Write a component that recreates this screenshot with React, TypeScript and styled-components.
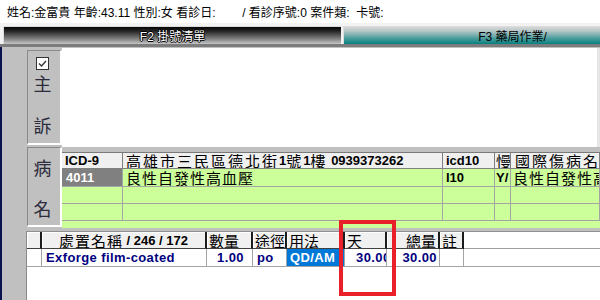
import React from "react";
import styled, { createGlobalStyle } from "styled-components";

const GlobalStyle = createGlobalStyle`
  * { box-sizing: border-box; }
  html, body { margin: 0; padding: 0; background: #fff; }
  body { font-family: "Liberation Sans", "Noto Sans CJK TC", sans-serif; }
`;

const DX_COLS = "61px 320px 52px 16px minmax(0, 1fr)";
const RX_COLS = "15px 165px 46px 34px 58px 42px 53px 24px minmax(0, 1fr)";

const Screen = styled.div`
  position: relative;
  width: 600px;
  height: 300px;
  overflow: hidden;
  display: flex;
  flex-direction: column;
  background: #fff;
`;

const InfoBar = styled.div`
  flex: none;
  height: 23px;
  padding-left: 7px;
  display: flex;
  align-items: center;
  font-size: 12px;
  color: #000;
  white-space: pre;
`;

const TabStrip = styled.div`
  flex: none;
  height: 24px;
  display: flex;
  gap: 2px;
  padding: 3px 0 0 3px;
  background: #f2f2f2;
  border-bottom: 3px solid #7c7c7c;
  overflow: hidden;
`;

const Tab = styled.div<{ $active?: boolean }>`
  flex: none;
  width: 338px;
  display: flex;
  align-items: center;
  justify-content: center;
  font-size: 12px;
  border-top: 1px solid #dcdcdc;
  border-left: 1px solid #dcdcdc;
  background: ${(p) =>
    p.$active
      ? "linear-gradient(to bottom, #d6d6d6 0%, #b2c6c6 25%, #4f9e9e 65%, #058080 100%)"
      : "linear-gradient(to bottom, #050505 0%, #262626 25%, #8c8c8c 75%, #c6c6c6 100%)"};
  color: ${(p) => (p.$active ? "#000" : "#fff")};
  text-shadow: ${(p) =>
    p.$active
      ? "none"
      : "1px 0 0 #000, -1px 0 0 #000, 0 1px 0 #000, 0 -1px 0 #000"};
`;

const Body = styled.div`
  flex: 1;
  display: flex;
  flex-direction: column;
  background: #c0c0c0;
  border-left: 2px solid #0b1250;
  padding-left: 24px;
`;

const Upper = styled.div`
  flex: none;
  height: 184px;
  display: flex;
`;

const SideColumn = styled.div`
  flex: none;
  width: 36px;
  display: flex;
  flex-direction: column;
  gap: 2px;
  padding: 3px 0 0 1px;
`;

const SidePanel = styled.div<{ $h: number; $pad: number }>`
  height: ${(p) => p.$h}px;
  display: flex;
  flex-direction: column;
  align-items: center;
  padding: ${(p) => p.$pad}px 3px 0 0;
  border-top: 1px solid #8a8a8a;
  border-left: 1px solid #8a8a8a;
  border-right: 2px solid #fff;
  border-bottom: 2px solid #fff;
`;

const SideChar = styled.div<{ $mt: number }>`
  margin-top: ${(p) => p.$mt}px;
  height: 20px;
  line-height: 20px;
  font-size: 18px;
  font-family: "Noto Sans CJK TC", sans-serif;
  color: #2c2c3c;
`;

const CheckBox = styled.div`
  width: 13px;
  height: 13px;
  background: #fff;
  border: 1px solid #333;
  display: flex;
  align-items: center;
  justify-content: center;
`;

const RightPane = styled.div`
  flex: 1;
  min-width: 0;
  display: flex;
  flex-direction: column;
  padding-top: 1px;
`;

const Complaint = styled.div`
  height: 99px;
  margin-bottom: 5px;
  background: #fff;
  border-right: 3px solid #e6e6e6;
`;

const DxTable = styled.div`
  height: 76px;
  background: #ccff99;
  border-top: 1px solid #7a7a7a;
  overflow: hidden;
`;

const GridRow = styled.div<{ $cols: string; $h: number }>`
  display: grid;
  grid-template-columns: ${(p) => p.$cols};
  height: ${(p) => p.$h}px;
`;

const DxHead = styled.div<{ $pad?: number }>`
  display: flex;
  align-items: center;
  background: #f0f0f0;
  border-right: 1px solid #808080;
  border-bottom: 1px solid #808080;
  padding-left: ${(p) => p.$pad ?? 3}px;
  font-size: 13px;
  font-weight: bold;
  line-height: 14px;
  white-space: pre;
  overflow: hidden;
`;

const DxCell = styled.div<{ $sel?: boolean; $pad?: number }>`
  display: flex;
  align-items: center;
  background: ${(p) => (p.$sel ? "#808080" : "transparent")};
  color: ${(p) => (p.$sel ? "#fff" : "#000")};
  border-right: 1px solid #a4a4a4;
  border-bottom: 1px solid #a4a4a4;
  padding-left: ${(p) => p.$pad ?? 3}px;
  font-size: 13px;
  font-weight: bold;
  line-height: 15px;
  white-space: nowrap;
  overflow: hidden;
`;

const Han = styled.span<{ $sp?: number }>`
  font-family: "Noto Sans CJK TC", sans-serif;
  font-weight: 400;
  font-size: 15px;
  line-height: 15px;
  letter-spacing: ${(p) => p.$sp ?? 1}px;
`;

const Lower = styled.div`
  flex: 1;
  background: #fff;
  border-left: 1px solid #8a8a8a;
  border-top: 1px solid #909090;
`;

const RxHead = styled.div<{ $align?: string }>`
  display: flex;
  align-items: center;
  justify-content: ${(p) =>
    p.$align === "center" ? "center" : p.$align === "right" ? "flex-end" : "flex-start"};
  background: #f0f0f0;
  border-right: 2px solid #1c1c1c;
  border-bottom: 1px solid #404040;
  box-shadow: inset 1px 1px 0 #fff;
  padding: 0 2px;
  font-size: 13px;
  font-weight: bold;
  line-height: 15px;
  white-space: pre;
  overflow: hidden;
`;

const RxHeadFill = styled.div`
  border-bottom: 1px solid #a0a0a0;
`;

const RxCell = styled.div<{ $align?: string; $sel?: boolean; $padL?: number; $padR?: number }>`
  background: ${(p) => (p.$sel ? "#0078d7" : "#fff")};
  color: ${(p) => (p.$sel ? "#fff" : "#000080")};
  border-right: 1px solid #a4a4a4;
  border-bottom: 1px solid #a4a4a4;
  padding: 0 ${(p) => p.$padR ?? 0}px 0 ${(p) => p.$padL ?? 0}px;
  text-align: ${(p) => p.$align ?? "left"};
  font-size: 13px;
  font-weight: bold;
  line-height: 17px;
  letter-spacing: 0.4px;
  white-space: nowrap;
  overflow: hidden;
`;

const RxFill = styled.div`
  border-bottom: 1px solid #a4a4a4;
`;

const Highlight = styled.div`
  position: absolute;
  left: 339px;
  top: 220px;
  width: 57px;
  height: 76px;
  border: 4px solid #e8202a;
  pointer-events: none;
`;

export default function App() {
  return (
    <>
      <GlobalStyle />
      <Screen>
        <InfoBar>
          {"姓名:金富貴 年齡:43.11 性別:女 看診日:        / 看診序號:0 案件類:  卡號:"}
        </InfoBar>
        <TabStrip>
          <Tab>F2 掛號清單</Tab>
          <Tab $active>F3 藥局作業/</Tab>
        </TabStrip>
        <Body>
          <Upper>
            <SideColumn>
              <SidePanel $h={95} $pad={6}>
                <CheckBox>
                  <svg width="11" height="11" viewBox="0 0 11 11">
                    <path d="M2 5.5 L4.5 8 L9 3" fill="none" stroke="#333" strokeWidth="1.3" />
                  </svg>
                </CheckBox>
                <SideChar $mt={3}>主</SideChar>
                <SideChar $mt={22}>訴</SideChar>
              </SidePanel>
              <SidePanel $h={80} $pad={9}>
                <SideChar $mt={0}>病</SideChar>
                <SideChar $mt={21}>名</SideChar>
              </SidePanel>
            </SideColumn>
            <RightPane>
              <Complaint />
              <DxTable>
                <GridRow $cols={DX_COLS} $h={16}>
                  <DxHead>ICD-9</DxHead>
                  <DxHead>
                    <Han $sp={2}>高雄市三民區德北街</Han>1<Han $sp={2}>號</Han>1<Han $sp={2}>樓</Han>{" 0939373262"}
                  </DxHead>
                  <DxHead>icd10</DxHead>
                  <DxHead $pad={1}>
                    <Han>慢</Han>
                  </DxHead>
                  <DxHead $pad={4}>
                    <Han $sp={2}>國際傷病名稱</Han>
                  </DxHead>
                </GridRow>
                <GridRow $cols={DX_COLS} $h={18}>
                  <DxCell $sel $pad={4}>4011</DxCell>
                  <DxCell>
                    <Han>良性自發性高血壓</Han>
                  </DxCell>
                  <DxCell>I10</DxCell>
                  <DxCell $pad={1}>Y/</DxCell>
                  <DxCell $pad={2}>
                    <Han>良性自發性高血壓</Han>
                  </DxCell>
                </GridRow>
                {[0, 1].map((i) => (
                  <GridRow key={i} $cols={DX_COLS} $h={17}>
                    <DxCell />
                    <DxCell />
                    <DxCell />
                    <DxCell />
                    <DxCell />
                  </GridRow>
                ))}
              </DxTable>
            </RightPane>
          </Upper>
          <Lower>
            <GridRow $cols={RX_COLS} $h={17}>
              <RxHead />
              <RxHead $align="center">
                <Han>處置名稱</Han>{" / 246 / 172"}
              </RxHead>
              <RxHead>
                <Han $sp={0}>數量</Han>
              </RxHead>
              <RxHead>
                <Han $sp={0}>途徑</Han>
              </RxHead>
              <RxHead>
                <Han $sp={0}>用法</Han>
              </RxHead>
              <RxHead>
                <Han $sp={0}>天</Han>
              </RxHead>
              <RxHead $align="right">
                <Han $sp={0}>總量</Han>
              </RxHead>
              <RxHead>
                <Han $sp={0}>註</Han>
              </RxHead>
              <RxHeadFill />
            </GridRow>
            <GridRow $cols={RX_COLS} $h={18}>
              <RxCell />
              <RxCell $padL={4}>Exforge film-coated</RxCell>
              <RxCell $align="right" $padR={8}>1.00</RxCell>
              <RxCell $padL={4}>po</RxCell>
              <RxCell $sel $padL={3}>QD/AM</RxCell>
              <RxCell $padL={11}>30.00</RxCell>
              <RxCell $align="right" $padR={2}>30.00</RxCell>
              <RxCell />
              <RxFill />
            </GridRow>
          </Lower>
        </Body>
        <Highlight />
      </Screen>
    </>
  );
}
